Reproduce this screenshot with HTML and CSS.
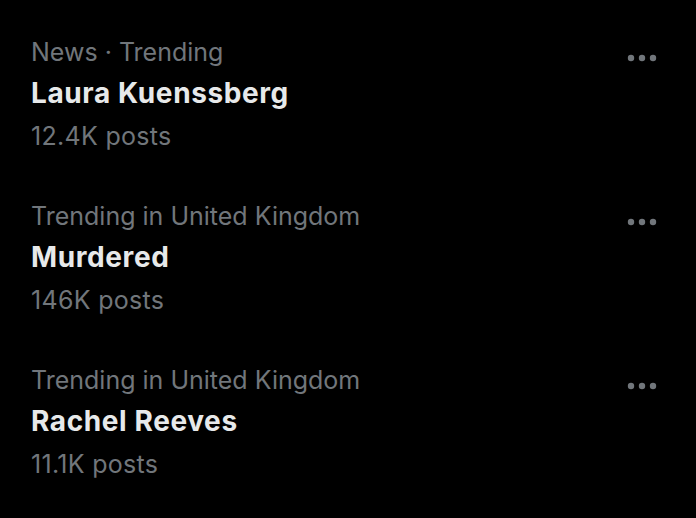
FILE: index.html
```html
<!DOCTYPE html>
<html lang="en">
<head>
<meta charset="utf-8">
<title>Trends</title>
<link rel="stylesheet" href="styles.css">
</head>
<body>
<ul class="trends">
  <li class="trend">
    <div class="trend-text">
      <div class="trend-meta">News · Trending</div>
      <div class="trend-name">Laura Kuenssberg</div>
      <div class="trend-count">12.4K posts</div>
    </div>
    <button class="more" aria-label="More">
      <svg viewBox="0 0 30 8" width="30" height="8"><circle cx="4" cy="4" r="3.2"/><circle cx="15" cy="4" r="3.2"/><circle cx="26" cy="4" r="3.2"/></svg>
    </button>
  </li>
  <li class="trend">
    <div class="trend-text">
      <div class="trend-meta">Trending in United Kingdom</div>
      <div class="trend-name">Murdered</div>
      <div class="trend-count">146K posts</div>
    </div>
    <button class="more" aria-label="More">
      <svg viewBox="0 0 30 8" width="30" height="8"><circle cx="4" cy="4" r="3.2"/><circle cx="15" cy="4" r="3.2"/><circle cx="26" cy="4" r="3.2"/></svg>
    </button>
  </li>
  <li class="trend">
    <div class="trend-text">
      <div class="trend-meta">Trending in United Kingdom</div>
      <div class="trend-name">Rachel Reeves</div>
      <div class="trend-count">11.1K posts</div>
    </div>
    <button class="more" aria-label="More">
      <svg viewBox="0 0 30 8" width="30" height="8"><circle cx="4" cy="4" r="3.2"/><circle cx="15" cy="4" r="3.2"/><circle cx="26" cy="4" r="3.2"/></svg>
    </button>
  </li>
</ul>
</body>
</html>
```
FILE: styles.css
```css
html, body {
  margin: 0;
  height: 100%;
  background: #000;
}

body {
  font-family: Inter, "Noto Sans", sans-serif;
  -webkit-font-smoothing: antialiased;
}

.trends {
  list-style: none;
  margin: 0;
  padding: 13px 0 0;
}

.trend {
  display: flex;
  justify-content: space-between;
  align-items: flex-start;
  padding: 21px 39px 21px 31px;
}

.trend-text {
  display: flex;
  flex-direction: column;
}

.trend-meta,
.trend-count {
  color: #71767b;
  font-size: 25px;
  font-weight: 400;
}

.trend-meta {
  line-height: 36px;
}

.trend-name {
  color: #e7e9ea;
  font-size: 28px;
  font-weight: 700;
  letter-spacing: 0.6px;
  line-height: 46px;
}

.trend-count {
  letter-spacing: 0.3px;
  line-height: 40px;
}

.more {
  background: none;
  border: 0;
  padding: 0;
  margin-top: 20px;
  display: flex;
  cursor: pointer;
}

.more svg {
  fill: #71767b;
}
```
